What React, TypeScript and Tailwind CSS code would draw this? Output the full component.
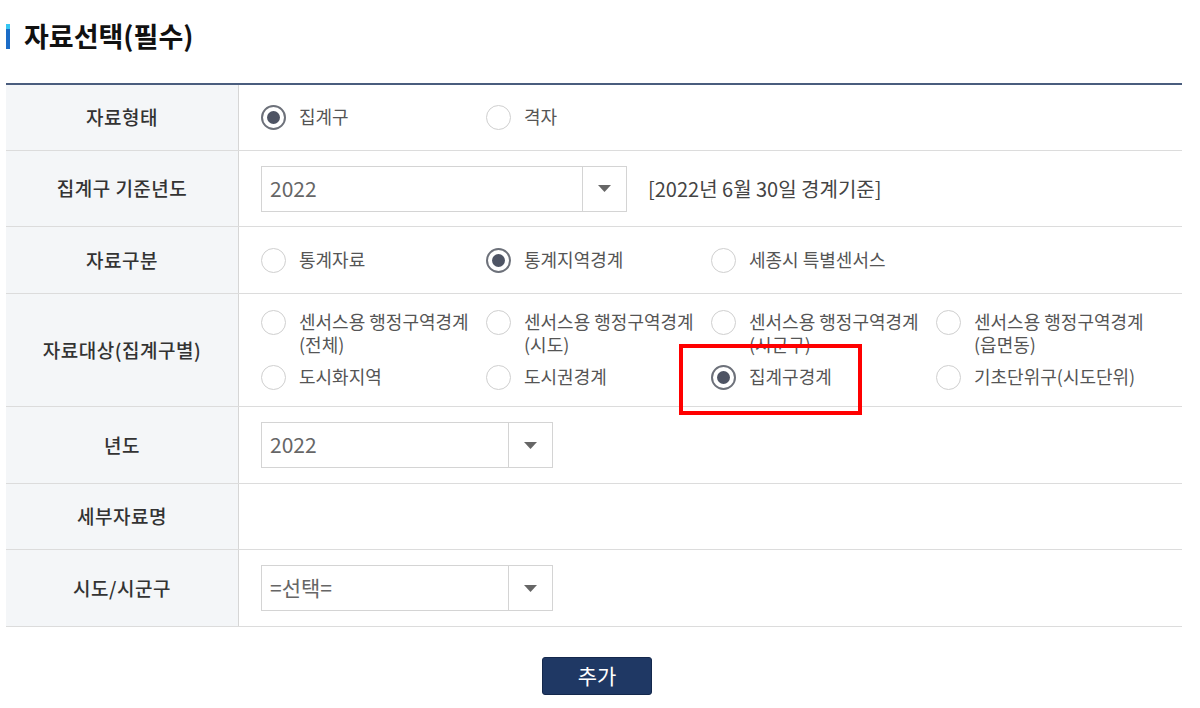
import React from "react";

const font = { fontFamily: '"Noto Sans CJK KR", "Noto Sans", sans-serif' };

function Radio({ checked = false }: { checked?: boolean }) {
  return (
    <span
      className={`flex h-[25px] w-[25px] shrink-0 items-center justify-center rounded-full bg-white ${
        checked ? "border-2 border-[#6d717a]" : "border border-[#cfcfcf]"
      }`}
    >
      {checked && <span className="h-[13px] w-[13px] rounded-full bg-[#4e5464]" />}
    </span>
  );
}

function Option({ label, checked }: { label: React.ReactNode; checked?: boolean }) {
  return (
    <label className="flex w-[225px] items-start gap-[13px]">
      <Radio checked={checked} />
      <span className="text-[18px] leading-[23px] text-[#555]">{label}</span>
    </label>
  );
}

function Select({ value, width }: { value: string; width: string }) {
  return (
    <div className={`flex h-[46px] ${width} border border-[#d4d4d4] bg-white`}>
      <div className="flex flex-1 items-center pl-[8px] text-[21px] text-[#666]">{value}</div>
      <div className="flex w-[44px] items-center justify-center border-l border-[#d4d4d4]">
        <svg width="13" height="7" viewBox="0 0 13 7">
          <path d="M0 0 H13 L6.5 7 Z" fill="#666" />
        </svg>
      </div>
    </div>
  );
}

function Label({ children }: { children: React.ReactNode }) {
  return (
    <div className="flex w-[233px] shrink-0 items-center justify-center border-r border-[#d6d6d6] bg-[#f4f6f8] text-[19px] font-medium tracking-[0.5px] text-[#333]">
      {children}
    </div>
  );
}

function Row({ label, h, children }: { label: string; h: string; children?: React.ReactNode }) {
  return (
    <div className={`flex ${h} border-b border-[#dcdcdc]`}>
      <Label>{label}</Label>
      <div className="flex flex-1 items-center pl-[22px]">{children}</div>
    </div>
  );
}

export default function App() {
  return (
    <div className="min-h-[708px] bg-white" style={font}>
      <div className="flex h-[83px] items-start pt-[19px] pl-[6px]">
        <span className="mt-[5px] h-[25px] w-[4px] bg-gradient-to-b from-[#37c6f2] from-20% to-[#1b6cc7] to-20%" />
        <h2 className="ml-[14px] text-[27px] font-bold leading-[34px] text-[#111]">자료선택(필수)</h2>
      </div>

      <div className="relative ml-[6px] w-[1176px] border-t-2 border-[#4a5d7e]">
        <Row label="자료형태" h="h-[66px]">
          <Option label="집계구" checked />
          <Option label="격자" />
        </Row>
        <Row label="집계구 기준년도" h="h-[76px]">
          <Select value="2022" width="w-[366px]" />
          <span className="ml-[21px] text-[20px] text-[#444]">[2022년 6월 30일 경계기준]</span>
        </Row>
        <Row label="자료구분" h="h-[67px]">
          <Option label="통계자료" />
          <Option label="통계지역경계" checked />
          <Option label="세종시 특별센서스" />
        </Row>
        <div className="flex h-[113px] border-b border-[#dcdcdc]">
          <Label>자료대상(집계구별)</Label>
          <div className="grid flex-1 grid-cols-[225px_225px_225px_225px] content-start gap-y-[9px] pl-[22px] pt-[16px]">
            <Option label={<>센서스용 행정구역경계<br />(전체)</>} />
            <Option label={<>센서스용 행정구역경계<br />(시도)</>} />
            <Option label={<>센서스용 행정구역경계<br />(시군구)</>} />
            <Option label={<>센서스용 행정구역경계<br />(읍면동)</>} />
            <Option label="도시화지역" />
            <Option label="도시권경계" />
            <Option label="집계구경계" checked />
            <Option label="기초단위구(시도단위)" />
          </div>
        </div>
        <Row label="년도" h="h-[77px]">
          <Select value="2022" width="w-[292px]" />
        </Row>
        <Row label="세부자료명" h="h-[66px]" />
        <Row label="시도/시군구" h="h-[77px]">
          <Select value="=선택=" width="w-[292px]" />
        </Row>

        <div className="pointer-events-none absolute left-[673px] top-[259px] h-[71px] w-[183px] border-4 border-[#ff0000]" />
      </div>

      <div className="ml-[542px] mt-[30px] flex h-[38px] w-[110px] items-center justify-center rounded-[3px] border border-[#14284c] bg-[#1f3864] text-[21px] text-white">
        추가
      </div>
    </div>
  );
}
